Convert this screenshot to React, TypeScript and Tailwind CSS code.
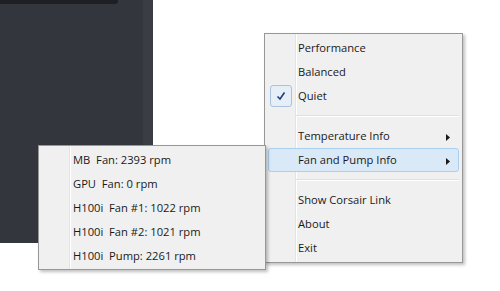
const FONT = { fontFamily: '"Segoe UI", "Open Sans", "Noto Sans", sans-serif' };

type Item = { label: string; checked?: boolean; submenu?: boolean; active?: boolean; sep?: boolean };

const MAIN_ITEMS: Item[] = [
  { label: "Performance" },
  { label: "Balanced" },
  { label: "Quiet", checked: true },
  { label: "", sep: true },
  { label: "Temperature Info", submenu: true },
  { label: "Fan and Pump Info", submenu: true, active: true },
  { label: "", sep: true },
  { label: "Show Corsair Link" },
  { label: "About" },
  { label: "Exit" },
];

const FAN_ITEMS = [
  "MB\u00a0 Fan: 2393 rpm",
  "GPU\u00a0 Fan: 0 rpm",
  "H100i\u00a0 Fan #1: 1022 rpm",
  "H100i\u00a0 Fan #2: 1021 rpm",
  "H100i\u00a0 Pump: 2261 rpm",
];

const Arrow = () => (
  <svg width="4" height="7" viewBox="0 0 4 7" className="absolute right-[8px] top-[9px]">
    <path d="M0 0 L4 3.5 L0 7 Z" fill="#1a1a1a" />
  </svg>
);

const MenuRow = ({ item }: { item: Item }) => {
  if (item.sep) {
    return (
      <div className="h-[16px] flex items-center pl-[31px] pr-[3px]">
        <div className="w-full h-[2px] border-t border-[#e0e0e0] border-b border-b-white" />
      </div>
    );
  }
  return (
    <div
      className={
        "relative h-[24px] flex items-center pl-[29px] mx-[3px] rounded-[3px] border " +
        (item.active ? "bg-[#dae9f8] border-[#a9d0ef]" : "border-transparent")
      }
    >
      {item.checked && (
        <div className="absolute left-[1px] top-[0px] w-[22px] h-[22px] rounded-[3px] border border-[#a9c2df] bg-[#e6eef8] flex items-center justify-center">
          <svg width="10" height="10" viewBox="0 0 10 10">
            <path d="M1.5 5.5 L4 8 L8.5 1.5" stroke="#1e3f7a" strokeWidth="1.6" fill="none" />
          </svg>
        </div>
      )}
      <span className="text-[11.2px] text-[#1a1a1a] leading-none">{item.label}</span>
      {item.submenu && <Arrow />}
    </div>
  );
};

export default function App() {
  return (
    <div className="relative w-[500px] h-[291px] bg-white overflow-hidden" style={FONT}>
      {/* background window */}
      <div className="w-[153px] h-[243px] bg-[#33363d] flex">
        <div className="flex-1 flex flex-col">
          <div className="w-[118px] h-[4px] bg-[#1d1f24] rounded-br-[3px]" />
        </div>
        <div className="w-[10px] bg-[#3a3d44]" />
      </div>

      {/* main context menu */}
      <div className="absolute left-[264px] top-[33px] w-[199px] h-[230px] bg-[#f0f0f0] border border-[#979797] shadow-[2px_2px_3px_rgba(0,0,0,0.25)] py-[2px]">
        <div className="absolute left-[30px] top-0 bottom-0 w-[2px] border-l border-[#e2e3e3] border-r border-r-white" />
        <div className="relative flex flex-col">
          {MAIN_ITEMS.map((item, i) => (
            <MenuRow key={i} item={item} />
          ))}
        </div>
      </div>

      {/* fan submenu */}
      <div className="absolute left-[38px] top-[145px] w-[228px] h-[125px] bg-[#f0f0f0] border border-[#979797] shadow-[2px_2px_3px_rgba(0,0,0,0.25)] py-[2px]">
        <div className="absolute left-[30px] top-0 bottom-0 w-[2px] border-l border-[#e2e3e3] border-r border-r-white" />
        <div className="relative flex flex-col">
          {FAN_ITEMS.map((label) => (
            <div key={label} className="h-[24px] flex items-center pl-[31px] mx-[3px]">
              <span className="text-[11.2px] text-[#1a1a1a] leading-none whitespace-pre">{label}</span>
            </div>
          ))}
        </div>
      </div>
    </div>
  );
}
